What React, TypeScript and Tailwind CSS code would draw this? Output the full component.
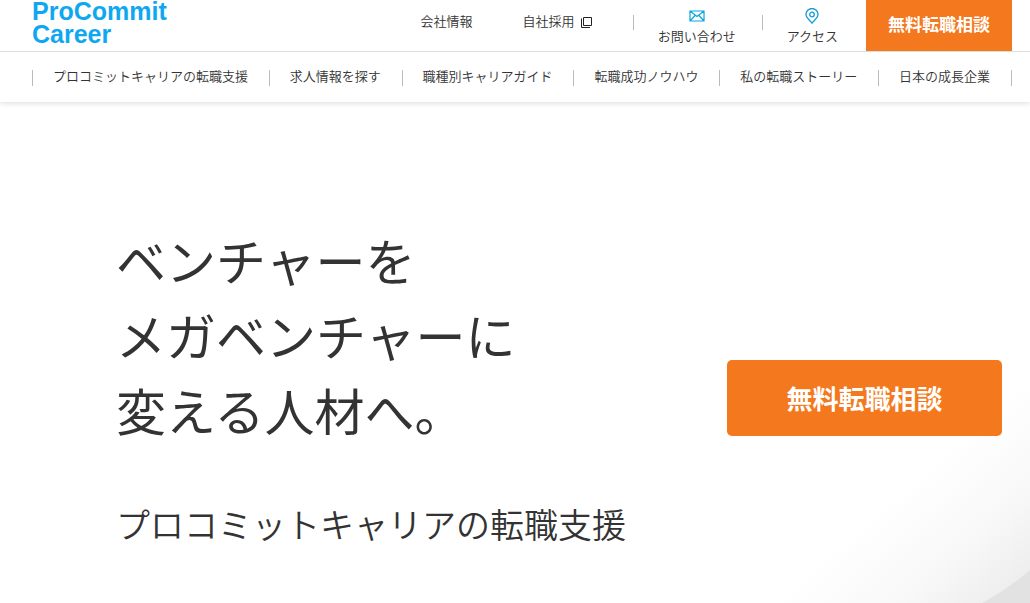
const navItems = [
  'プロコミットキャリアの転職支援',
  '求人情報を探す',
  '職種別キャリアガイド',
  '転職成功ノウハウ',
  '私の転職ストーリー',
  '日本の成長企業',
];

function WindowIcon() {
  return (
    <svg className="mt-[2px] h-[11px] w-[11px]" viewBox="0 0 11 11" fill="none" stroke="#222" strokeWidth="1" aria-hidden="true">
      <path d="M2.5 0.5h8v8h-8zM0.5 1.500v9h8.500" />
    </svg>
  );
}

function MailIcon() {
  return (
    <svg className="h-3 w-4" viewBox="0 0 16 12" fill="none" stroke="#0aa5e2" strokeWidth="1.2" aria-hidden="true">
      <path d="M1 1h14v10H1zM1 1l7 5.500L15 1M1 11l5-5.500M15 11l-5-5.500" />
    </svg>
  );
}

function PinIcon() {
  return (
    <svg className="h-4 w-[14px]" viewBox="0 0 14 16" fill="none" stroke="#149dd6" strokeWidth="1.3" aria-hidden="true">
      <path d="M7 15.200C5.400 12.600 1 10 1 6.500a6 6 0 0 1 12 0C13 10 8.600 12.600 7 15.200z" />
      <circle cx="7" cy="6.500" r="2.300" />
    </svg>
  );
}

function Divider() {
  return <span className="mt-[15px] h-[15px] w-px bg-[#bbb]" />;
}

function Header() {
  return (
    <header className="relative bg-white text-[13px] leading-5 font-[350] shadow-[0_1px_6px_rgba(0,0,0,0.15)]">
      <div className="flex h-[52px] items-start justify-between border-b border-[#ddd] pr-[18px] pl-8">
        <a
          href="#"
          className="font-['Liberation_Sans',Arial,sans-serif] text-[25px] leading-[23px] font-bold text-[#0fa8f0]"
        >
          ProCommit
          <br />
          Career
        </a>
        <div className="flex items-start">
          <a href="#company" className="mt-[11px] mr-[50px]">
            会社情報
          </a>
          <a href="#recruit" className="mt-[11px] mr-[41px] flex items-center gap-[6px]">
            自社採用
            <WindowIcon />
          </a>
          <Divider />
          <a href="#contact" className="mr-[26px] ml-6 flex flex-col items-center pt-[6px]">
            <span className="flex h-5 items-center">
              <MailIcon />
            </span>
            お問い合わせ
          </a>
          <Divider />
          <a href="#access" className="mr-[28px] ml-6 flex flex-col items-center pt-[6px]">
            <span className="flex h-5 items-center">
              <PinIcon />
            </span>
            アクセス
          </a>
          <a
            href="#consult"
            className="flex h-[51px] w-[146px] items-center justify-center bg-[#f4781d] pb-1 text-[17px] font-bold text-white"
          >
            無料転職相談
          </a>
        </div>
      </div>
      <nav className="pt-[18px] pr-[18px] pb-4 pl-8">
        <ul className="flex h-4 items-center border-r border-[#bbb]">
          {navItems.map((item) => (
            <li key={item} className="flex h-4 flex-auto items-center justify-center border-l border-[#bbb]">
              <a href="#" className="pr-px pb-1 whitespace-nowrap">
                {item}
              </a>
            </li>
          ))}
        </ul>
      </nav>
    </header>
  );
}

export default function App() {
  return (
    <div className="flex min-h-screen flex-col bg-white font-['Noto_Sans_CJK_JP',sans-serif] text-[#333]">
      <Header />
      <main className="relative flex flex-1 items-start justify-between overflow-hidden pr-7 pl-[116px]">
        <svg
          className="pointer-events-none absolute right-0 bottom-0 h-[263px] w-[330px]"
          viewBox="0 0 330 263"
          aria-hidden="true"
        >
          <defs>
            <linearGradient id="haze" gradientUnits="userSpaceOnUse" x1="70" y1="263" x2="182" y2="391">
              <stop offset="0" stopColor="#fff" />
              <stop offset="0.5" stopColor="#f8f8f8" />
              <stop offset="1" stopColor="#eaeaea" />
            </linearGradient>
          </defs>
          <path d="M0 0h330v263H0z" fill="url(#haze)" />
          <path d="M282 263Q308 249 330 230V263z" fill="#e2e2e2" />
        </svg>
        <div className="relative pt-[120px]">
          <h1 className="text-[50px] leading-[75px] font-normal">
            ベンチャーを
            <br />
            メガベンチャーに
            <br />
            変える人材へ。
          </h1>
          <p className="mt-[52px] text-[34px] leading-[50px] font-[350]">プロコミットキャリアの転職支援</p>
        </div>
        <a
          href="#consult"
          className="relative mt-[258px] flex h-[76px] w-[275px] items-center justify-center rounded-[5px] bg-[#f4781d] pb-[2px] text-[26px] font-bold text-white"
        >
          無料転職相談
        </a>
      </main>
    </div>
  );
}
